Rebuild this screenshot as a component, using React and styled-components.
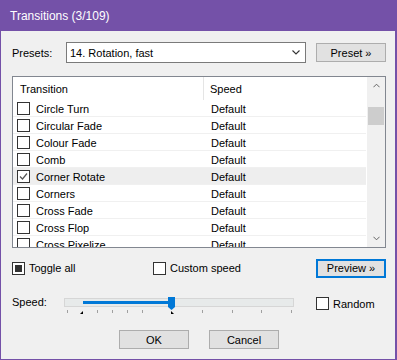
import styled, { createGlobalStyle } from 'styled-components'

const GlobalStyle = createGlobalStyle`
  html, body {
    margin: 0;
    padding: 0;
    background: #ffffff;
  }
  body {
    font-family: "Liberation Sans", Arial, sans-serif;
    font-size: 11px;
    color: #000;
  }
`

const transitions = [
  { name: 'Circle Turn', speed: 'Default' },
  { name: 'Circular Fade', speed: 'Default' },
  { name: 'Colour Fade', speed: 'Default' },
  { name: 'Comb', speed: 'Default' },
  { name: 'Corner Rotate', speed: 'Default', checked: true },
  { name: 'Corners', speed: 'Default' },
  { name: 'Cross Fade', speed: 'Default' },
  { name: 'Cross Flop', speed: 'Default' },
  { name: 'Cross Pixelize', speed: 'Default' },
]

const Window = styled.div`
  width: 397px;
  height: 360px;
  box-sizing: border-box;
  border: 1px solid #7451a8;
  border-right-width: 2px;
  background: #f0f0f0;
  display: flex;
  flex-direction: column;
`

const TitleBar = styled.div`
  height: 30px;
  background: #7451a8;
  color: #fff;
  font-size: 12px;
  display: flex;
  align-items: center;
  padding-left: 9px;
`

const Body = styled.div`
  padding: 11px 9px 0 11px;
  display: flex;
  flex-direction: column;
`

const Row = styled.div`
  display: flex;
  align-items: ${p => p.$top ? 'flex-start' : 'center'};
  height: ${p => p.$h}px;
  margin-top: ${p => p.$mt || 0}px;
`

const Label = styled.div`
  width: ${p => p.$w}px;
  flex-shrink: 0;
  line-height: 14px;
`

const Combo = styled.div`
  width: 240px;
  height: 21px;
  box-sizing: border-box;
  border: 1px solid #7a7a7a;
  background: #fff;
  display: flex;
  align-items: center;
  justify-content: space-between;
  padding: 0 5px 0 3px;
`

const Button = styled.div`
  width: 70px;
  height: 19px;
  box-sizing: border-box;
  border: ${p => p.$default ? '2px solid #0078d7' : '1px solid #adadad'};
  background: #e1e1e1;
  display: flex;
  align-items: center;
  justify-content: center;
  margin-left: ${p => p.$ml || 0}px;
`

const List = styled.div`
  margin-top: 13px;
  height: 172px;
  box-sizing: border-box;
  border: 1px solid #828790;
  background: #fff;
  display: flex;
`

const ListMain = styled.div`
  flex: 1;
  overflow: hidden;
  display: flex;
  flex-direction: column;
`

const Header = styled.div`
  height: 23px;
  flex-shrink: 0;
  display: flex;
`

const HeaderCell = styled.div`
  box-sizing: border-box;
  width: ${p => p.$w ? p.$w + 'px' : 'auto'};
  flex: ${p => p.$w ? 'none' : 1};
  border-right: ${p => p.$w ? '1px solid #e5e5e5' : 'none'};
  padding-left: ${p => p.$pl}px;
  display: flex;
  align-items: center;
`

const ItemRow = styled.div`
  height: 17px;
  flex-shrink: 0;
  box-sizing: border-box;
  border-bottom: 1px solid #f0f0f0;
  background: ${p => p.$hl ? '#eeeeee' : '#fff'};
  display: flex;
  align-items: center;
  margin-right: 1px;
`

const NameCell = styled.div`
  width: 191px;
  display: flex;
  align-items: center;
  padding-left: 4px;
  box-sizing: border-box;
  gap: 6px;
`

const ItemText = styled.span`
  padding-top: 1px;
`

const SpeedCell = styled.div`
  padding: 1px 0 0 7px;
`

const Box = styled.div`
  width: 13px;
  height: 13px;
  box-sizing: border-box;
  border: 1px solid #333;
  background: #fff;
  flex-shrink: 0;
  display: flex;
  align-items: center;
  justify-content: center;
  margin-top: ${p => p.$mt || 0}px;
`

const Fill = styled.div`
  width: 7px;
  height: 7px;
  background: #333;
`

const Scrollbar = styled.div`
  width: 18px;
  background: #f0f0f0;
  display: flex;
  flex-direction: column;
  align-items: center;
  justify-content: space-between;
  position: relative;
`

const Arrow = styled.div`
  height: 17px;
  display: flex;
  align-items: center;
  justify-content: center;
`

const Thumb = styled.div`
  position: absolute;
  top: 30px;
  left: 1px;
  width: 16px;
  height: 18px;
  background: #cdcdcd;
`

const CheckLabel = styled.div`
  display: flex;
  align-items: center;
  gap: 4px;
  width: ${p => p.$w ? p.$w + 'px' : 'auto'};
  flex: ${p => p.$w ? 'none' : 1};
`

const Slider = styled.svg`
  display: block;
  flex-shrink: 0;
  margin-right: 21px;
`

const RandomWrap = styled.div`
  display: flex;
  align-items: center;
  gap: 4px;
  margin-top: 2px;
`

const ButtonRow = styled.div`
  display: flex;
  gap: 20px;
  margin-top: 15px;
  padding-left: 107px;
`

function Chevron({ up, color = '#333', w = 8, h = 5 }) {
  return (
    <svg width={w} height={h} viewBox="0 0 8 5">
      <polyline
        points={up ? '0.5,4.5 4,1 7.5,4.5' : '0.5,0.5 4,4 7.5,0.5'}
        fill="none"
        stroke={color}
        strokeWidth="1.1"
      />
    </svg>
  )
}

function Checkbox({ checked, mt }) {
  return (
    <Box $mt={mt}>
      {checked && (
        <svg width="11" height="11" viewBox="0 0 11 11">
          <polyline points="2,5.5 4.5,8 9,2.5" fill="none" stroke="#555" strokeWidth="1.2" />
        </svg>
      )}
    </Box>
  )
}

const ticks = [4, 34, 49, 64, 79, 139, 169, 198, 228]

export default function App() {
  return (
    <>
      <GlobalStyle />
      <Window>
        <TitleBar>Transitions (3/109)</TitleBar>
        <Body>
          <Row $h={21}>
            <Label $w={54}>Presets:</Label>
            <Combo>
              <span>14. Rotation, fast</span>
              <Chevron />
            </Combo>
            <Button $ml={10}>Preset »</Button>
          </Row>

          <List>
            <ListMain>
              <Header>
                <HeaderCell $w={191} $pl={7}>Transition</HeaderCell>
                <HeaderCell $pl={6}>Speed</HeaderCell>
              </Header>
              {transitions.map(t => (
                <ItemRow key={t.name} $hl={t.checked}>
                  <NameCell>
                    <Checkbox checked={t.checked} />
                    <ItemText>{t.name}</ItemText>
                  </NameCell>
                  <SpeedCell>{t.speed}</SpeedCell>
                </ItemRow>
              ))}
            </ListMain>
            <Scrollbar>
              <Arrow><Chevron up color="#606060" w={7} h={5} /></Arrow>
              <Thumb />
              <Arrow><Chevron color="#606060" w={7} h={5} /></Arrow>
            </Scrollbar>
          </List>

          <Row $h={18} $mt={11}>
            <CheckLabel $w={141}>
              <Box><Fill /></Box>
              Toggle all
            </CheckLabel>
            <CheckLabel>
              <Checkbox />
              Custom speed
            </CheckLabel>
            <Button $default>Preview »</Button>
          </Row>

          <Row $h={20} $mt={18} $top>
            <Label $w={51}>Speed:</Label>
            <Slider width="232" height="20" viewBox="0 0 232 20">
              <rect x="1.5" y="3.5" width="229" height="8" fill="#e7eaea" stroke="#d6d6d6" />
              <rect x="20" y="6" width="88" height="3" fill="#0078d7" />
              <polygon points="105,2 112,2 112,12 108.5,15 105,12" fill="#0078d7" />
              {ticks.map(x => (
                <line key={x} x1={x + 0.5} y1="15" x2={x + 0.5} y2="18" stroke="#a0a0a0" />
              ))}
              <polygon points="17,19 20,16 20,19" fill="#000" />
              <polygon points="108,16 108,19 111,19" fill="#000" />
            </Slider>
            <RandomWrap>
              <Checkbox />
              Random
            </RandomWrap>
          </Row>

          <ButtonRow>
            <Button>OK</Button>
            <Button>Cancel</Button>
          </ButtonRow>
        </Body>
      </Window>
    </>
  )
}
